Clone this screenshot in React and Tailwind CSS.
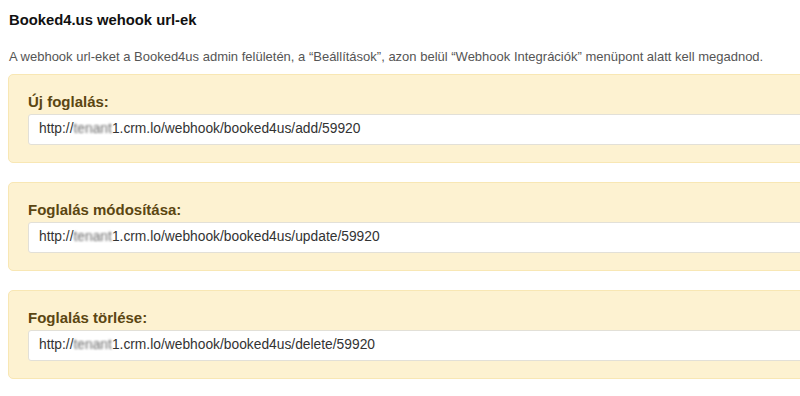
import React from 'react';

const hooks = [
    { label: 'Új foglalás:', action: 'add' },
    { label: 'Foglalás módosítása:', action: 'update' },
    { label: 'Foglalás törlése:', action: 'delete' },
];

const Redacted = () => (
    <span className="text-[#6b6b6b] blur-[1px]">tenant</span>
);

const App = () => {
    return (
        <div className="w-[800px] h-[396px] overflow-hidden bg-white font-['Liberation_Sans',Arial,sans-serif]">
            <div className="pl-[9px] pt-[11px]">
                <h2 className="text-[14.8px] font-bold text-[#111] leading-[18px]">Booked4.us wehook url-ek</h2>
                <p className="mt-[20px] text-[13px] text-[#555] leading-[16px]">
                    A webhook url-eket a Booked4us admin felületén, a “Beállítások”, azon belül “Webhook Integrációk” menüpont alatt kell megadnod.
                </p>
            </div>

            <div className="flex flex-col gap-[19px] pl-[8px] mt-[9px]">
                {hooks.map((h) => (
                    <div
                        key={h.action}
                        className="w-[820px] h-[89px] rounded-[5px] border border-[#f8e7b4] bg-[#fdf2d1] pl-[19px] pt-[18px]"
                    >
                        <div className="text-[15px] font-bold text-[#5b4612] leading-[18px]">{h.label}</div>
                        <div className="mt-[3px] h-[31px] w-[800px] rounded-[3px] border border-[#e2e0d8] bg-white pl-[10px] flex items-center text-[13.8px] text-[#333]">
                            http://<Redacted />1.crm.lo/webhook/booked4us/{h.action}/59920
                        </div>
                    </div>
                ))}
            </div>
        </div>
    );
};

export default App;
